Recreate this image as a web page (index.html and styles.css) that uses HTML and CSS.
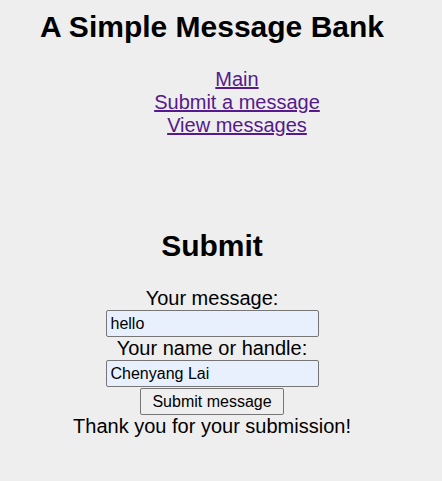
FILE: index.html
```html
<!DOCTYPE html>
<html>
<head>
<meta charset="utf-8">
<link rel="stylesheet" href="styles.css">
</head>
<body>
<div class="page">
  <h1 class="title">A Simple Message Bank</h1>
  <nav class="nav">
    <a href="#">Main</a>
    <a href="#">Submit a message</a>
    <a href="#">View messages</a>
  </nav>
  <h2 class="heading">Submit</h2>
  <form class="form">
    <label class="label">Your message:</label>
    <input class="field" type="text" value="hello">
    <label class="label">Your name or handle:</label>
    <input class="field" type="text" value="Chenyang Lai">
    <button class="btn" type="button">Submit message</button>
    <p class="thanks">Thank you for your submission!</p>
  </form>
</div>
</body>
</html>
```
FILE: styles.css
```css
html { background: #eeeeee; }
body {
  margin: 0;
  font-family: "Liberation Sans", Arial, sans-serif;
  color: #000;
}
.page {
  width: 424px;
  display: flex;
  flex-direction: column;
  align-items: center;
}
.title {
  font-size: 30px;
  font-weight: bold;
  margin: 10px 0 0;
  line-height: 34px;
}
.nav {
  display: flex;
  flex-direction: column;
  align-items: center;
  margin: 24px 0 0 50px;
  font-size: 20px;
  line-height: 23px;
}
.nav a { color: #551a8b; }
.heading {
  font-size: 30px;
  font-weight: bold;
  margin: 92px 0 0;
  line-height: 34px;
}
.form {
  display: flex;
  flex-direction: column;
  align-items: center;
  margin-top: 24px;
  font-size: 20px;
  line-height: 23px;
}
.field {
  box-sizing: border-box;
  width: 213px;
  height: 27px;
  margin: 0;
  padding: 1px 4px;
  font: 16px "Liberation Sans", Arial, sans-serif;
  background: #e8f0fe;
  border: 1px solid #767676;
  border-radius: 2px;
  color: #000;
}
.btn {
  box-sizing: border-box;
  height: 27px;
  width: 144px;
  margin: 1px 0 0;
  padding: 0 6px;
  font: 16px "Liberation Sans", Arial, sans-serif;
  background: #efefef;
  border: 1px solid #767676;
  border-radius: 2px;
  color: #000;
}
.thanks { margin: 0; }
```
